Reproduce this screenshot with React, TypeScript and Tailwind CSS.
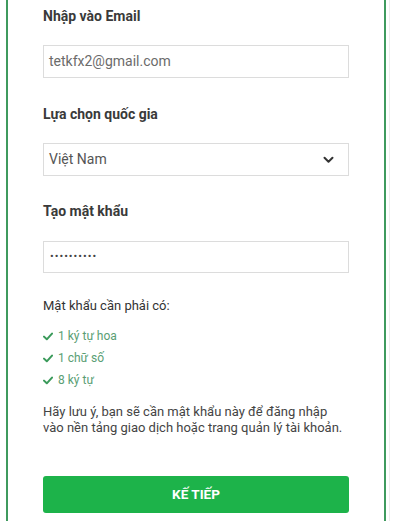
import React from "react";

function Check() {
  return (
    <svg width="10" height="9" viewBox="0 0 10 9" className="shrink-0">
      <path d="M1 4.6 L3.8 7.3 L9 1.6" fill="none" stroke="#3a9a5a" strokeWidth="2" strokeLinecap="round" strokeLinejoin="round" />
    </svg>
  );
}

export default function App() {
  return (
    <div className="w-[394px] h-[521px] bg-white overflow-hidden flex" style={{ fontFamily: "Roboto, 'Noto Sans', sans-serif" }}>
      <div className="ml-[6px] w-[380px] h-full border-x-2 border-[#3f9a5e] px-[35px] pt-[6px] flex flex-col">
        <div className="h-[20px] leading-[20px] text-[14px] font-bold text-[#3a3a3a]">Nhập vào Email</div>
        <div className="mt-[19px] h-[33px] border border-[#dcdcdc] flex items-center px-[5px] text-[14px] text-[#6b6b6b]">
          tetkfx2@gmail.com
        </div>

        <div className="mt-[26px] h-[20px] leading-[20px] text-[14px] font-bold text-[#3a3a3a]">Lựa chọn quốc gia</div>
        <div className="mt-[19px] h-[33px] border border-[#dcdcdc] flex items-center justify-between pl-[5px] pr-[14px] text-[14px] text-[#555]">
          <span>Việt Nam</span>
          <svg width="11" height="8" viewBox="0 0 11 8">
            <path d="M1.5 1.8 L5.5 5.8 L9.5 1.8" fill="none" stroke="#333" strokeWidth="2" strokeLinecap="round" strokeLinejoin="round" />
          </svg>
        </div>

        <div className="mt-[25px] h-[20px] leading-[20px] text-[14px] font-bold text-[#3a3a3a]">Tạo mật khẩu</div>
        <div className="mt-[20px] h-[32px] border border-[#dcdcdc] flex items-center pl-[6px] text-[11px] tracking-[1px] text-[#444]">
          ••••••••••
        </div>

        <div className="mt-[25px] h-[16px] leading-[16px] text-[13px] text-[#333]">Mật khẩu cần phải có:</div>
        <div className="mt-[11px] flex flex-col text-[12px] text-[#5a9e74]">
          <div className="h-[22px] flex items-center gap-[5px]"><Check /><span>1 ký tự hoa</span></div>
          <div className="h-[22px] flex items-center gap-[5px]"><Check /><span>1 chữ số</span></div>
          <div className="h-[22px] flex items-center gap-[5px]"><Check /><span>8 ký tự</span></div>
        </div>

        <div className="mt-[13px] text-[13px] leading-[16px] text-[#444]">
          Hãy lưu ý, bạn sẽ cần mật khẩu này để đăng nhập vào nền tảng giao dịch hoặc trang quản lý tài khoản.
        </div>

        <div className="mt-[40px] h-[37px] rounded-[3px] bg-[#1db34a] flex items-center justify-center text-white font-bold text-[13.5px]">
          KẾ TIẾP
        </div>
      </div>
      <div className="ml-[3px] w-px h-full bg-[#ececec]" />
    </div>
  );
}
